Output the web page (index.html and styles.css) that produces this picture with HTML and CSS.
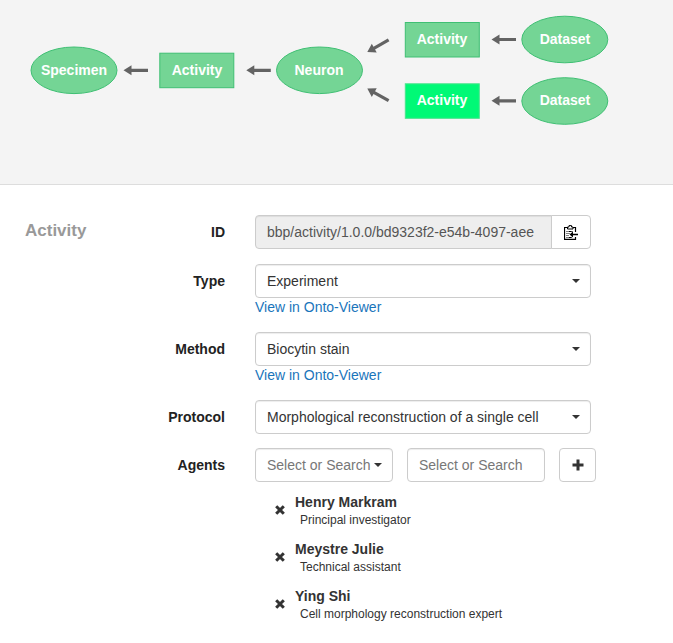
FILE: index.html
```html
<!DOCTYPE html>
<html lang="en">
<head>
<meta charset="utf-8">
<meta name="viewport" content="width=device-width, initial-scale=1">
<title>Activity</title>
<link rel="stylesheet" href="styles.css">
</head>
<body>
<header class="graph-panel">
  <svg class="graph" width="640" height="184" viewBox="0 0 640 184" role="img" aria-label="Provenance graph">
    <defs>
      <g id="arrow">
        <path d="M0 0 8-5V-1.600H24.500V1.600H8V5Z"/>
      </g>
    </defs>
    <g class="node">
      <ellipse cx="74" cy="70.300" rx="43" ry="23.300"/>
      <rect x="159.800" y="53.200" width="74" height="34.500"/>
      <ellipse cx="319.500" cy="70.300" rx="43" ry="23.300"/>
      <rect x="405.300" y="22.500" width="74" height="34.500"/>
      <rect class="selected" x="405.300" y="83.800" width="74" height="34.500"/>
      <ellipse cx="564.800" cy="39.500" rx="43" ry="23.300"/>
      <ellipse cx="564.800" cy="101" rx="43" ry="23.300"/>
    </g>
    <g class="arrows">
      <use href="#arrow" transform="translate(123.500 70.300)"/>
      <use href="#arrow" transform="translate(246.300 70.300)"/>
      <use href="#arrow" transform="translate(491.500 39.500)"/>
      <use href="#arrow" transform="translate(491.500 100.800)"/>
      <use href="#arrow" transform="translate(367.300 52) rotate(-29.500)"/>
      <use href="#arrow" transform="translate(367.300 88.600) rotate(29.500)"/>
    </g>
    <g class="node-label">
      <text x="74" y="75">Specimen</text>
      <text x="197" y="75">Activity</text>
      <text x="319" y="75">Neuron</text>
      <text x="442" y="44">Activity</text>
      <text x="442" y="105">Activity</text>
      <text x="565" y="44">Dataset</text>
      <text x="565" y="105">Dataset</text>
    </g>
  </svg>
</header>
<main class="details">
  <form class="form">
    <div class="row row-first">
      <h2 class="title">Activity</h2>
      <label class="label" for="activity-id">ID</label>
      <div class="field input-group">
        <input class="control" id="activity-id" type="text" readonly value="bbp/activity/1.0.0/bd9323f2-e54b-4097-aee">
        <button class="button copy" type="button" aria-label="Copy ID">
          <svg width="14" height="15" viewBox="0 0 14 15" fill="none" stroke="#000" aria-hidden="true">
            <path d="M3 2.500H.500V14.300H11.500V12M9 2.500H11.500V7" stroke-width="1.200"/>
            <path d="M3.500 4V2H5V.600H7.500V2H9V4Z"/>
            <path d="M2.500 6.500H9M2.500 8.500H5.500M2.500 10.500H5M2.500 12.500H8" stroke-dasharray="1 1 3 0"/>
            <path d="M5.500 9.500 9 6.500V8.700H14V10.300H9V12.500Z" fill="#000" stroke="none"/>
          </svg>
        </button>
      </div>
    </div>
    <div class="row">
      <label class="label" for="type">Type</label>
      <div class="field">
        <div class="select"><select class="control" id="type"><option>Experiment</option></select></div>
        <a class="link" href="#type">View in Onto-Viewer</a>
      </div>
    </div>
    <div class="row">
      <label class="label" for="method">Method</label>
      <div class="field">
        <div class="select"><select class="control" id="method"><option>Biocytin stain</option></select></div>
        <a class="link" href="#method">View in Onto-Viewer</a>
      </div>
    </div>
    <div class="row">
      <label class="label" for="protocol">Protocol</label>
      <div class="field">
        <div class="select"><select class="control" id="protocol"><option>Morphological reconstruction of a single cell</option></select></div>
      </div>
    </div>
    <div class="row">
      <label class="label" for="agent">Agents</label>
      <div class="agents">
        <div class="agent-picker">
          <div class="select compact"><select class="control muted" id="agent"><option>Select or Search</option></select></div>
          <input class="control" type="text" placeholder="Select or Search" aria-label="Agent role">
          <button class="button add" type="button" aria-label="Add agent">
            <svg width="12" height="12" viewBox="0 0 12 12" aria-hidden="true"><path d="M6 .500V11.500M.500 6H11.500" stroke="#333" stroke-width="3"/></svg>
          </button>
        </div>
        <ul class="agent-list">
          <li class="agent">
            <button class="remove" type="button" aria-label="Remove Henry Markram"><svg width="10" height="10" viewBox="0 0 10 10" aria-hidden="true"><path d="M1.200 1.200 8.800 8.800M8.800 1.200 1.200 8.800"/></svg></button>
            <div><strong class="name">Henry Markram</strong><span class="role">Principal investigator</span></div>
          </li>
          <li class="agent">
            <button class="remove" type="button" aria-label="Remove Meystre Julie"><svg width="10" height="10" viewBox="0 0 10 10" aria-hidden="true"><path d="M1.200 1.200 8.800 8.800M8.800 1.200 1.200 8.800"/></svg></button>
            <div><strong class="name">Meystre Julie</strong><span class="role">Technical assistant</span></div>
          </li>
          <li class="agent">
            <button class="remove" type="button" aria-label="Remove Ying Shi"><svg width="10" height="10" viewBox="0 0 10 10" aria-hidden="true"><path d="M1.200 1.200 8.800 8.800M8.800 1.200 1.200 8.800"/></svg></button>
            <div><strong class="name">Ying Shi</strong><span class="role">Cell morphology reconstruction expert</span></div>
          </li>
        </ul>
      </div>
    </div>
  </form>
</main>
</body>
</html>
```
FILE: styles.css
```css
* { box-sizing: border-box; }

body {
  margin: 0;
  background: #fff;
  color: #333;
  font: 14px/20px "Liberation Sans", Arial, sans-serif;
}

input, select, button { font: inherit; color: inherit; }

.graph-panel {
  background: #f4f4f4;
  border-bottom: 1px solid #ddd;
}

.graph { display: block; }
.node { fill: #74d595; stroke: #3fbf73; }
.node .selected { fill: #00f976; stroke: #48e48c; }
.arrows { fill: #636363; }
.node-label { fill: #fff; font-weight: bold; text-anchor: middle; }

.details { padding: 30px 77px 0 25px; }
.form { display: grid; gap: 14px; }

.row {
  display: grid;
  grid-template-columns: 100px 100px minmax(0, 1fr);
}
.row-first { min-height: 35px; }

.title {
  margin: 0;
  color: #999;
  font-size: 17px;
  line-height: 32px;
}

.label {
  grid-column: 2;
  color: #222;
  font-weight: bold;
  line-height: 34px;
  text-align: right;
}

.field, .agents { grid-column: 3; margin-left: 30px; }
.field { margin-right: 5px; }

.control {
  display: block;
  width: 100%;
  min-width: 0;
  height: 34px;
  padding: 0 11px;
  border: 1px solid #ccc;
  border-radius: 4px;
  background: #fff;
  box-shadow: inset 0 1px 1px rgba(0, 0, 0, 0.075);
}
.control::placeholder { color: #777; opacity: 1; }
.muted { color: #777; }

.input-group { display: flex; height: 34px; }
.input-group .control {
  flex: 1;
  border-radius: 4px 0 0 4px;
  background: #eee;
  color: #555;
}

.button {
  display: flex;
  align-items: center;
  justify-content: center;
  height: 34px;
  padding: 0;
  border: 1px solid #ccc;
  border-radius: 4px;
  background: #fff;
}
.copy {
  width: 40px;
  margin-left: -1px;
  border-radius: 0 4px 4px 0;
}

.select { position: relative; }
.select .control { appearance: none; }
.select::after {
  content: "";
  position: absolute;
  top: 15px;
  right: 11px;
  border: 4px solid transparent;
  border-top-color: #333;
  border-bottom: 0;
  pointer-events: none;
}

.link {
  display: block;
  margin-bottom: 2px;
  color: #1a75bb;
  line-height: 18px;
  text-decoration: none;
}

.agent-picker {
  display: grid;
  grid-template-columns: 1fr 1fr 37px;
  gap: 14px;
}
.compact .control { padding-right: 0; }

.agent-list {
  display: grid;
  gap: 11px;
  margin: 0;
  padding: 10px 0 20px 20px;
  list-style: none;
}
.agent { display: flex; align-items: center; gap: 10px; }
.name, .role { display: block; }
.role { padding-left: 5px; font-size: 12px; line-height: 16px; }
.remove {
  display: flex;
  padding: 0;
  border: 0;
  background: none;
}
.remove path { stroke: #333; stroke-width: 3; }
```
